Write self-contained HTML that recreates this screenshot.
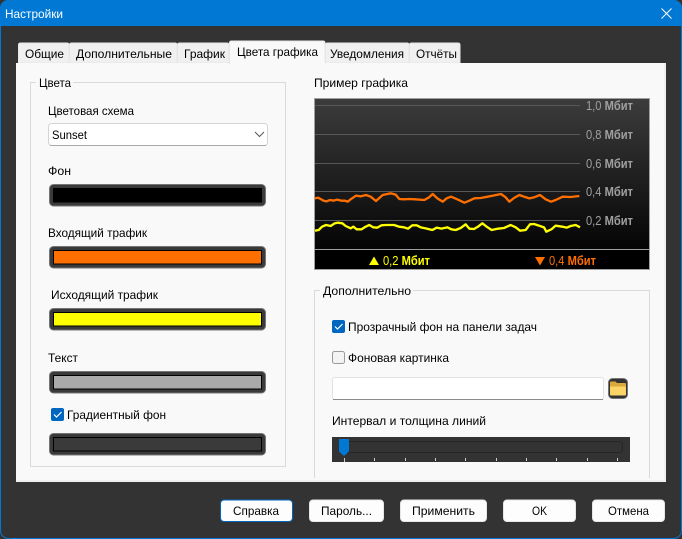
<!DOCTYPE html>
<html><head><meta charset="utf-8"><style>
html,body{margin:0;padding:0;background:#333;width:682px;height:539px;overflow:hidden}
svg{display:block}
text{font-family:"Liberation Sans",sans-serif;font-size:12px;fill:#000}
</style></head><body>
<svg width="682" height="539" viewBox="0 0 682 539" xmlns="http://www.w3.org/2000/svg">
<defs>
<linearGradient id="g" x1="0" y1="0" x2="0" y2="1"><stop offset="0" stop-color="#3c3c3c"/><stop offset="1" stop-color="#050505"/></linearGradient>
</defs>
<rect width="682" height="539" fill="#333"/>
<rect x=".5" y=".5" width="681" height="538" rx="8" fill="#333" stroke="#0078d4"/>
<path d="M0 26V8A8 8 0 0 1 8 0H674A8 8 0 0 1 682 8V26Z" fill="#0078d4"/>
<text x="5" y="18" textLength="58" lengthAdjust="spacingAndGlyphs" style="fill:#fff">Настройки</text>
<path d="M661.5 8.5L671.5 18.5M671.5 8.5L661.5 18.5" stroke="#fff" stroke-width="1" fill="none"/>

<!-- tabs -->
<g fill="#f0f0f0" stroke="#e6e6e6">
<path d="M18.5 63V45q0-2 2-2H67q2 0 2 2V63Z"/>
<path d="M69.5 63V45q0-2 2-2H175q2 0 2 2V63Z"/>
<path d="M177.5 63V45q0-2 2-2H227q2 0 2 2V63Z"/>
<path d="M325.5 63V45q0-2 2-2H407q2 0 2 2V63Z"/>
<path d="M409.5 63V45q0-2 2-2H458q2 0 2 2V63Z"/>
</g>
<rect x="16" y="63" width="650" height="419" fill="#f0f0f0"/>
<rect x="16" y="63" width="648" height="417" fill="#f9f9f9"/>
<path d="M229.5 64V43q0-2 2-2H323q2 0 2 2V64Z" fill="#f9f9f9" stroke="#e8e8e8"/>
<rect x="230" y="62" width="95" height="3" fill="#f9f9f9"/>
<text x="25" y="58" textLength="39" lengthAdjust="spacingAndGlyphs">Общие</text>
<text x="76" y="58" textLength="96" lengthAdjust="spacingAndGlyphs">Дополнительные</text>
<text x="184" y="58" textLength="41" lengthAdjust="spacingAndGlyphs">График</text>
<text x="237" y="56" textLength="81" lengthAdjust="spacingAndGlyphs">Цвета графика</text>
<text x="330" y="58" textLength="74" lengthAdjust="spacingAndGlyphs">Уведомления</text>
<text x="416" y="58" textLength="41" lengthAdjust="spacingAndGlyphs">Отчёты</text>

<!-- left group -->
<rect x="30.5" y="82.5" width="255" height="384" fill="none" stroke="#d9d9d9"/>
<rect x="36" y="80" width="37" height="5" fill="#f9f9f9"/>
<text x="39" y="87" textLength="32" lengthAdjust="spacingAndGlyphs">Цвета</text>
<text x="48" y="115" textLength="86" lengthAdjust="spacingAndGlyphs">Цветовая схема</text>
<rect x="48.5" y="123.5" width="219" height="22" rx="3" fill="#fff" stroke="#d4d4d4"/>
<path d="M50 145.5H266" stroke="#a8a8a8"/>
<text x="52" y="139" textLength="35" lengthAdjust="spacingAndGlyphs">Sunset</text>
<path d="M255 132l4.5 4.5 4.500-4.500" fill="none" stroke="#555" stroke-width="1"/>

<text x="48" y="175" textLength="23" lengthAdjust="spacingAndGlyphs">Фон</text>
<g stroke="#757575" fill="#3a3a3a">
<rect x="49.500" y="184.500" width="216" height="21.500" rx="4"/>
<rect x="49.500" y="246.500" width="216" height="21.500" rx="4"/>
<rect x="49.500" y="308.500" width="216" height="21.500" rx="4"/>
<rect x="49.500" y="371.500" width="216" height="21.500" rx="4"/>
<rect x="49.500" y="433.500" width="216" height="21.500" rx="4"/>
</g>
<g stroke="#000">
<rect x="53.500" y="188.500" width="208" height="13.500" fill="#000"/>
<rect x="53.500" y="250.500" width="208" height="13.500" fill="#ff6f00"/>
<rect x="53.500" y="312.500" width="208" height="13.500" fill="#ffff00"/>
<rect x="53.500" y="375.500" width="208" height="13.500" fill="#aaaaaa"/>
<rect x="53.500" y="437.500" width="208" height="13.500" fill="#3a3a3a"/>
</g>
<text x="48" y="237" textLength="99" lengthAdjust="spacingAndGlyphs">Входящий трафик</text>
<text x="51" y="299" textLength="107" lengthAdjust="spacingAndGlyphs">Исходящий трафик</text>
<text x="48" y="362" textLength="30" lengthAdjust="spacingAndGlyphs">Текст</text>
<rect x="51" y="408" width="13" height="13" rx="2" fill="#0067c0"/>
<path d="M54 414.500l2.500 2.500 5-5" fill="none" stroke="#fff" stroke-width="1.200"/>
<text x="67" y="419" textLength="99" lengthAdjust="spacingAndGlyphs">Градиентный фон</text>

<!-- chart -->
<text x="314" y="87" textLength="94" lengthAdjust="spacingAndGlyphs">Пример графика</text>
<rect x="314" y="98" width="336" height="172" fill="#a0a0a0"/>
<rect x="315" y="99" width="334" height="150" fill="url(#g)"/>
<rect x="315" y="250" width="334" height="19" fill="#000"/>
<path d="M315 105.500H580M315 134.500H580M315 163.500H580M315 191.500H580M315 220.500H580" stroke="#585858" stroke-width="1"/>
<g>
<text x="586" y="110" textLength="47" lengthAdjust="spacingAndGlyphs" style="fill:#a0a0a0;font-size:12.500px">1,0 <tspan font-weight="bold" style="fill:#a0a0a0">Мбит</tspan></text>
<text x="586" y="139" textLength="47" lengthAdjust="spacingAndGlyphs" style="fill:#a0a0a0;font-size:12.500px">0,8 <tspan font-weight="bold" style="fill:#a0a0a0">Мбит</tspan></text>
<text x="586" y="168" textLength="47" lengthAdjust="spacingAndGlyphs" style="fill:#a0a0a0;font-size:12.500px">0,6 <tspan font-weight="bold" style="fill:#a0a0a0">Мбит</tspan></text>
<text x="586" y="196" textLength="47" lengthAdjust="spacingAndGlyphs" style="fill:#a0a0a0;font-size:12.500px">0,4 <tspan font-weight="bold" style="fill:#a0a0a0">Мбит</tspan></text>
<text x="586" y="225" textLength="47" lengthAdjust="spacingAndGlyphs" style="fill:#a0a0a0;font-size:12.500px">0,2 <tspan font-weight="bold" style="fill:#a0a0a0">Мбит</tspan></text>
</g>
<g transform="translate(314 180) scale(.33333)" fill="none" stroke-width="7" stroke-linejoin="round">
<polyline stroke="#ff6f00" points="3,55 12,53 20,57 28,62 38,64 48,60 58,62 70,59 81,62 92,62 101,65 110,58 126,47 140,49 156,45 170,50 186,63 198,52 206,45 220,42 231,40 245,44 256,57 270,58 286,57 304,58 331,60 345,52 356,42 370,55 386,65 398,55 411,50 430,58 451,68 466,62 481,55 500,54 521,50 541,46 561,42 575,52 586,65 600,54 616,45 630,50 646,55 660,52 678,45 695,58 711,65 725,60 746,50 770,51 796,48"/>
<polyline stroke="#ffff00" points="3,152 14,150 24,140 36,135 50,138 62,130 72,128 85,130 95,138 110,145 118,140 128,148 142,148 155,140 166,135 178,142 190,143 202,136 216,135 240,135 255,140 270,142 282,146 295,136 308,136 320,142 335,145 355,150 368,143 382,146 400,142 412,148 425,150 440,144 455,133 466,146 480,147 492,140 505,130 518,140 533,150 552,146 570,144 590,135 605,142 618,152 635,150 648,133 660,132 678,138 690,142 697,155 712,148 725,137 745,140 758,143 770,138 785,135 798,142"/>
</g>
<rect x="314" y="249" width="336" height="1" fill="#a0a0a0"/>
<path d="M369 265l5-8.500 5 8.500Z" fill="#ffff00"/>
<text x="383" y="265" textLength="47" lengthAdjust="spacingAndGlyphs" style="fill:#ffff00;font-size:12.500px">0,2 <tspan font-weight="bold" style="fill:#ffff00">Мбит</tspan></text>
<path d="M535 257l5 8.500 5-8.500Z" fill="#ff6f00"/>
<text x="549" y="265" textLength="47" lengthAdjust="spacingAndGlyphs" style="fill:#ff6f00;font-size:12.500px">0,4 <tspan font-weight="bold" style="fill:#ff6f00">Мбит</tspan></text>

<!-- right group -->
<path d="M314.500 478V290.500H649.500V478" fill="none" stroke="#d9d9d9"/>
<rect x="320" y="288" width="93" height="5" fill="#f9f9f9"/>
<text x="323" y="295" textLength="88" lengthAdjust="spacingAndGlyphs">Дополнительно</text>
<rect x="332" y="320" width="13" height="13" rx="2" fill="#0067c0"/>
<path d="M335 326.500l2.500 2.500 5-5" fill="none" stroke="#fff" stroke-width="1.200"/>
<text x="348" y="331" textLength="189" lengthAdjust="spacingAndGlyphs">Прозрачный фон на панели задач</text>
<rect x="332.500" y="351.500" width="12" height="12" rx="2" fill="#f3f3f3" stroke="#9a9a9a"/>
<text x="348" y="362" textLength="101" lengthAdjust="spacingAndGlyphs">Фоновая картинка</text>
<rect x="332.500" y="377.500" width="271" height="22" rx="2" fill="#fff" stroke="#e2e2e2"/>
<path d="M333 399.500H603" stroke="#8a8a8a"/>
<rect x="608.500" y="378.500" width="19" height="20" rx="4" fill="#333" stroke="#757575"/>
<path d="M610 388v-5.500q0-1 1-1h4.500l1.500 1.500h8q1 0 1 1V388Z" fill="#d9a93c"/>
<path d="M610 386.500h16v8q0 1-1 1h-14q-1 0-1-1Z" fill="#fbd568"/>
<text x="332" y="425" textLength="154" lengthAdjust="spacingAndGlyphs">Интервал и толщина линий</text>
<rect x="332" y="437" width="298" height="25" fill="#333"/>
<rect x="339.500" y="441.500" width="283" height="11" rx="3" fill="#333" stroke="#262626"/>
<path d="M339 439h10v12.500l-5 4.500-5-4.500Z" fill="#0078d4"/>
<path d="M344.500 458v4M374.500 458v3M405.500 458v3M435.500 458v3M465.500 458v3M496.500 458v3M526.500 458v3M556.500 458v3M587.500 458v3M617.500 458v3" stroke="#ccc"/>

<!-- buttons -->
<rect x="220.500" y="500" width="72" height="21.500" rx="3.500" fill="#fdfdfd" stroke="#0067c0"/>
<g fill="#fdfdfd" stroke="#e6e6e6">
<rect x="309.500" y="500" width="74" height="21.500" rx="3.500"/>
<rect x="400.500" y="500" width="86" height="21.500" rx="3.500"/>
<rect x="503.500" y="500" width="72" height="21.500" rx="3.500"/>
<rect x="592.500" y="500" width="72" height="21.500" rx="3.500"/>
</g>
<text x="233" y="515" textLength="46" lengthAdjust="spacingAndGlyphs">Справка</text>
<text x="321" y="515" textLength="51" lengthAdjust="spacingAndGlyphs">Пароль...</text>
<text x="412" y="515" textLength="63" lengthAdjust="spacingAndGlyphs">Применить</text>
<text x="532" y="515" textLength="15" lengthAdjust="spacingAndGlyphs">OK</text>
<text x="608" y="515" textLength="41" lengthAdjust="spacingAndGlyphs">Отмена</text>
</svg>
</body></html>
